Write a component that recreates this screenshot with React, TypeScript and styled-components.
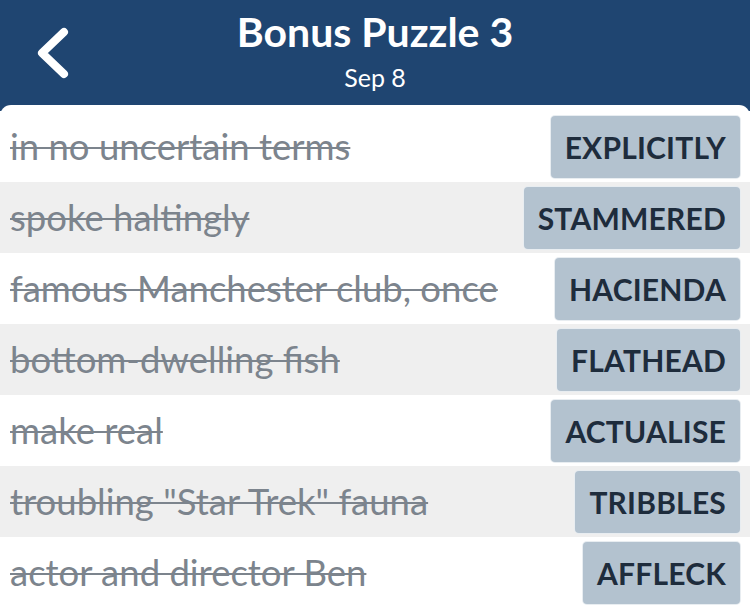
import React, { FunctionComponent } from "react";
import styled, { createGlobalStyle } from "styled-components";

const GlobalStyle = createGlobalStyle`
  html, body {
    margin: 0;
    padding: 0;
    background: #ffffff;
  }
  body {
    font-family: "Lato", "Noto Sans", sans-serif;
  }
`;

const Page = styled.div`
  width: 750px;
  height: 610px;
  overflow: hidden;
  background: #1f4571;
`;

const Header = styled.header`
  height: 105px;
  display: grid;
  grid-template-columns: 100px 1fr 100px;
  align-items: center;
  color: #ffffff;
`;

const BackButton = styled.button`
  justify-self: start;
  margin-left: 34px;
  padding: 0;
  border: none;
  background: none;
  display: flex;
  cursor: pointer;
`;

const TitleBlock = styled.div`
  display: flex;
  flex-direction: column;
  align-items: center;
  padding-bottom: 2px;
`;

const Title = styled.h1`
  margin: 0;
  font-size: 41px;
  font-weight: 700;
  line-height: 44px;
`;

const Subtitle = styled.span`
  font-size: 25px;
  line-height: 32px;
  margin-top: 7px;
`;

const Panel = styled.main`
  background: #ffffff;
  border-radius: 11px 11px 0 0;
  padding-top: 6px;
  height: 100%;
`;

const Row = styled.div<{ $shaded: boolean }>`
  height: 71px;
  display: flex;
  align-items: center;
  justify-content: space-between;
  padding: 0 10px;
  background: ${(p) => (p.$shaded ? "#efefef" : "#ffffff")};
`;

const Clue = styled.span`
  font-size: 36.5px;
  color: #7c848d;
  text-decoration: line-through;
  text-decoration-thickness: 1.5px;
  white-space: nowrap;
  margin-top: -2px;
`;

const Answer = styled.span`
  height: 62px;
  display: flex;
  align-items: center;
  padding: 0 14px;
  background: #b3c2cf;
  border-radius: 4px;
  box-shadow: 0 0 0 1px #e8edf1;
  color: #1e2c3c;
  font-size: 30px;
  font-weight: 700;
  letter-spacing: 0.2px;
`;

const clues = [
  { clue: "in no uncertain terms", answer: "EXPLICITLY" },
  { clue: "spoke haltingly", answer: "STAMMERED" },
  { clue: "famous Manchester club, once", answer: "HACIENDA" },
  { clue: "bottom-dwelling fish", answer: "FLATHEAD" },
  { clue: "make real", answer: "ACTUALISE" },
  { clue: 'troubling "Star Trek" fauna', answer: "TRIBBLES" },
  { clue: "actor and director Ben", answer: "AFFLECK" },
];

const App: FunctionComponent = () => {
  return (
    <Page>
      <GlobalStyle />
      <Header>
        <BackButton aria-label="Back">
          <svg width="36" height="52" viewBox="0 0 36 52">
            <path
              d="M30 5 L8 26 L30 47"
              fill="none"
              stroke="#ffffff"
              strokeWidth="8"
              strokeLinecap="round"
              strokeLinejoin="round"
            />
          </svg>
        </BackButton>
        <TitleBlock>
          <Title>Bonus Puzzle 3</Title>
          <Subtitle>Sep 8</Subtitle>
        </TitleBlock>
        <div />
      </Header>
      <Panel>
        {clues.map((c, i) => (
          <Row key={c.answer} $shaded={i % 2 === 1}>
            <Clue>{c.clue}</Clue>
            <Answer>{c.answer}</Answer>
          </Row>
        ))}
      </Panel>
    </Page>
  );
};

export default App;
